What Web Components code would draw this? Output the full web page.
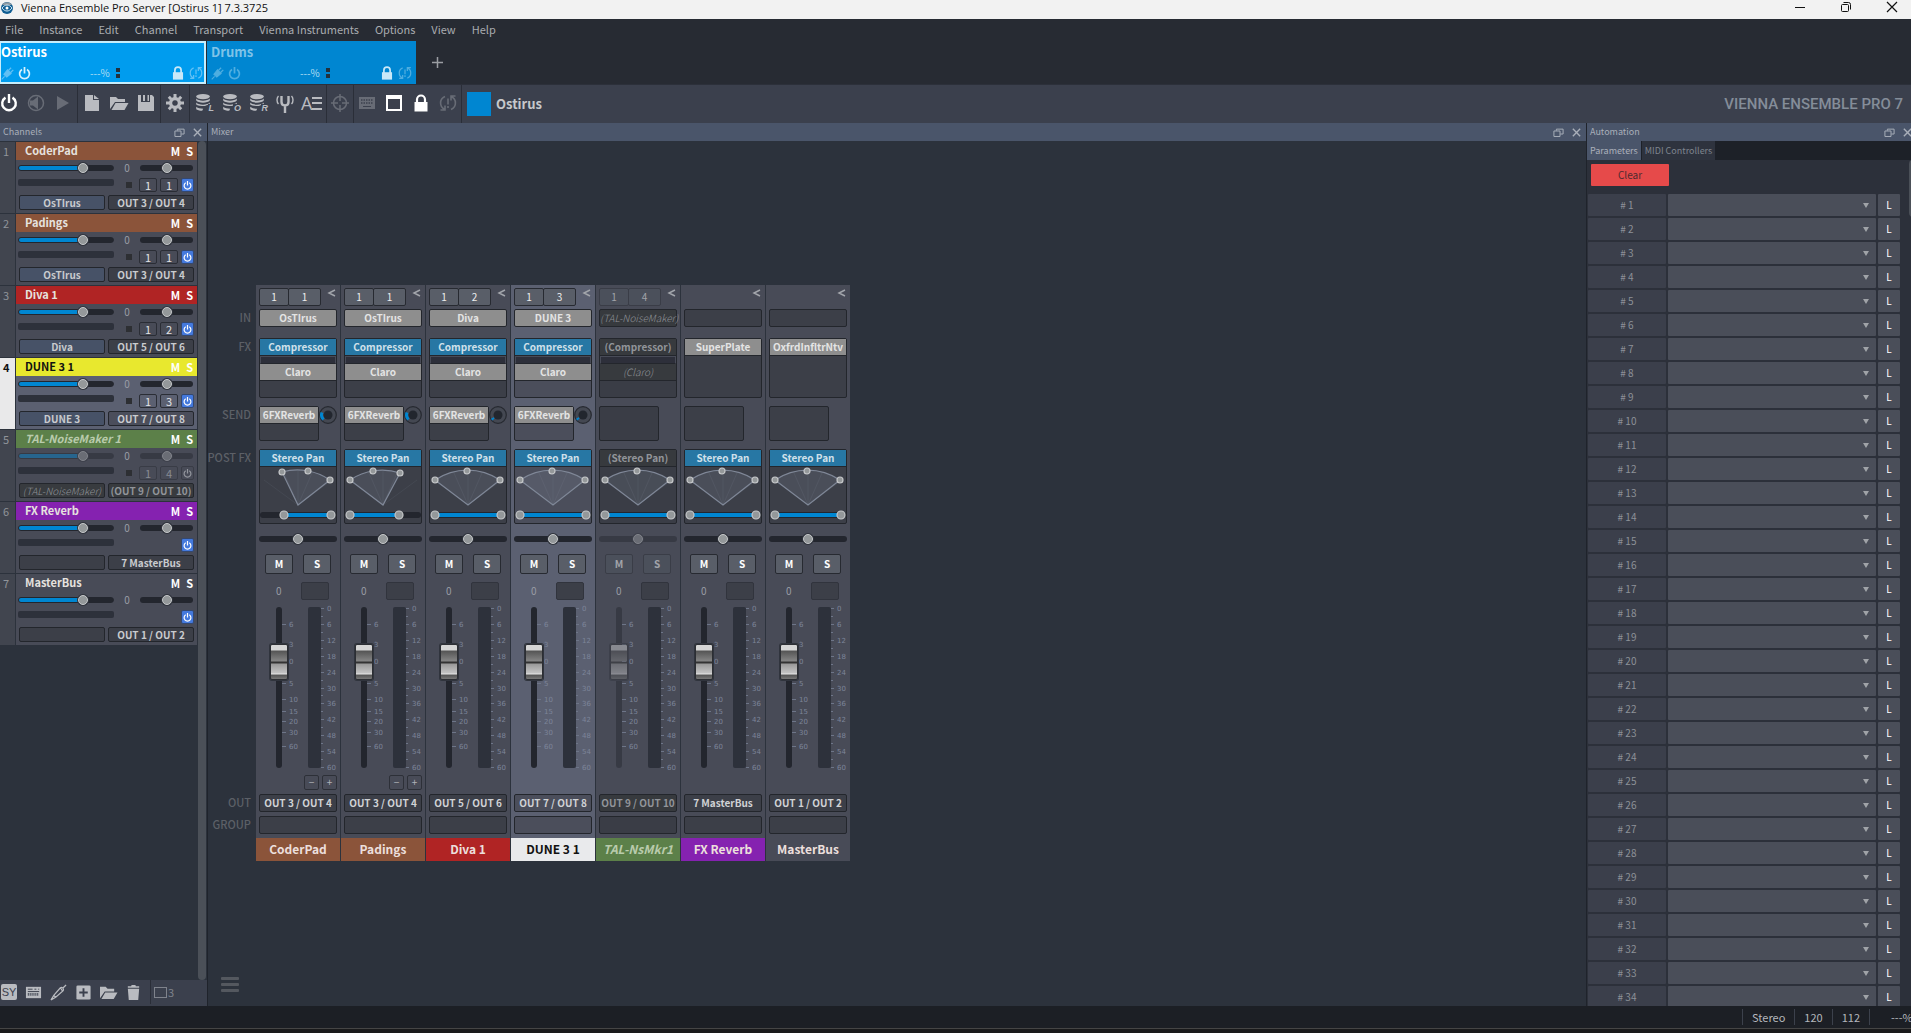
<!DOCTYPE html>
<html lang="en">
<head>
<meta charset="utf-8">
<title>Vienna Ensemble Pro Server</title>
<style>
  html, body {
    height: 100%;
    margin: 0;
    overflow: hidden;
    background: #1c1f25;
  }
  body {
    font-family: "Noto Sans CJK SC", "Noto Sans", sans-serif;
    font-size: 11px;
    line-height: 16px;
    color: #b4b7bc;
  }
</style>
</head>
<body>
<vep-app></vep-app>
<script>
const base = `
  * { box-sizing: border-box; }
  button, input, select {
    margin: 0;
    padding: 0;
    border: 0;
    font: inherit;
    color: inherit;
    background: none;
  }
  button { display: block; white-space: nowrap; }
  svg { display: block; }
`;

const rangeStyle = `
  input[type=range] {
    display: block;
    appearance: none;
    -webkit-appearance: none;
    width: 100%;
    height: 12px;
  }
  input[type=range]::-webkit-slider-runnable-track {
    height: 6px;
    border-radius: 3px;
    background: #23262e;
  }
  input.level::-webkit-slider-runnable-track {
    border: 1px solid #23262e;
    background: linear-gradient(90deg, #0086d1 68%, #23262e 68%);
  }
  input[type=range]::-webkit-slider-thumb {
    -webkit-appearance: none;
    width: 10px;
    height: 10px;
    margin-top: -2px;
    border: 1px solid #c6c8ca;
    border-radius: 50%;
    background: #94989a;
    box-shadow: 0 0 0 1px #30343d;
  }
  input.level::-webkit-slider-thumb { margin-top: -3px; }
  :host([off]) input[type=range] { opacity: .45; }
`;

const icons = {
  power: '<path d="M5.500 3.600a6.800 6.800 0 1 0 7 0" fill="none" stroke="currentColor" stroke-width="2.400"/><path d="M9 0v9" stroke="currentColor" stroke-width="2.400"/>',
  speaker: '<circle cx="9" cy="9" r="7.500" fill="none" stroke="currentColor" stroke-width="1.500"/><path d="M3 6.500h3l5-4v13l-5-4H3z" fill="currentColor"/>',
  play: '<path d="M3 2l12 7-12 7z" fill="currentColor"/>',
  file: '<path d="M2 1h8v5h6v11H2z" fill="currentColor"/><path d="M11 1l5 4h-5z" fill="currentColor"/>',
  folder: '<path d="M0 15V3h6l2 2h7v3H5z" fill="currentColor"/><path d="M5.500 9H18.500l-4 7H1.500z" fill="currentColor"/>',
  save: '<path d="M1 1h3v7h9V1h2l2 2v14H1z" fill="currentColor"/><path d="M6 1h2v6H6zM10.500 1h1.500v6h-1.500z" fill="currentColor"/>',
  gear: '<path d="M9 3a6 6 0 1 0 .01 0zM9 6.200a2.800 2.800 0 1 1-.01 0z" fill="currentColor" fill-rule="evenodd"/><g stroke="currentColor" stroke-width="3"><path d="M9 0v4M9 14v4M0 9h4M14 9h4M2.800 2.800l2.400 2.400M12.800 12.800l2.400 2.400M2.800 15.200l2.400-2.400M12.800 5.200l2.400-2.400"/></g>',
  disks: '<g fill="currentColor"><ellipse cx="8" cy="2.600" rx="6.800" ry="2.600"/><path d="M1.200 4.600c2 2.800 11.600 2.800 13.600 0v2c-2 2.800-11.600 2.800-13.600 0zM1.200 8.600c2 2.800 11.600 2.800 13.600 0v1.700c-3 .5-4 1.500-5 1.800-4 0-7.500-.5-8.600-1.600zM1.200 12.800c2 1.600 4 1.900 7 1.900l-1 2.100c-3 0-5-.6-6-1.500z"/></g>',
  fork: '<path d="M5.500 2v6c0 4.500 7 4.500 7 0V2M9 11v8" fill="none" stroke="currentColor" stroke-width="2.400"/><path d="M2.500 2c-2 2-2 6 0 8M15.500 2c2 2 2 6 0 8" fill="none" stroke="currentColor" stroke-width="1.400"/>',
  target: '<circle cx="9" cy="9" r="6.500" fill="none" stroke="currentColor" stroke-width="1.500"/><path d="M9 0v7M9 11v7M0 9h7M11 9h7" stroke="currentColor" stroke-width="1.500"/>',
  keyboard: '<path d="M1 3h16v12H1z" fill="currentColor"/><path d="M3 6h12M3 9h12" stroke="#3b404d" stroke-width="1.500" stroke-dasharray="1.500 1"/><path d="M5 12.500h8" stroke="#3b404d"/>',
  square: '<path d="M2 2.500h14v13.500H2z" fill="none" stroke="currentColor" stroke-width="2"/><path d="M1 1h16v4H1z" fill="currentColor"/>',
  lock: '<path d="M2.500 8h13v9.500h-13z" fill="currentColor"/><path d="M5 9V5.500a4 4 0 0 1 8 0V9" fill="none" stroke="currentColor" stroke-width="2.200"/>',
  sync: '<path d="M6 2.500a7 7 0 0 0 0 13M12 15.500a7 7 0 0 0 0-13M1.500 16h4.500v-4.500M16.500 2h-4.500v4.500M9 4.500v6M9 12v2" fill="none" stroke="currentColor" stroke-width="1.600"/>',
  plug: '<path d="M1 17l4-4M4 10l5-6 5 5-6 5z" fill="currentColor" stroke="currentColor" stroke-width="1.500"/><path d="M10 5l4-4M13 8l4-4" stroke="currentColor" stroke-width="1.800"/>',
  jack: '<path d="M1 17l3-5 7-8c2-1 4 1 3 3l-8 7-5 3M11 4l2 3M4 12l2 2M14 4l3-3" fill="none" stroke="currentColor" stroke-width="1.300"/>',
  keys: '<path d="M1 3h16v12H1z" fill="currentColor"/><path d="M3 5.500h5M10 5.500h2M14 5.500h1M3 8h12" stroke="#3b404d"/><path d="M3 11h12" stroke="#3b404d" stroke-width="3" stroke-dasharray="1 1"/>',
  plus: '<rect x="1.500" y="1.500" width="15" height="15" rx="1.500" fill="currentColor"/><path d="M9 4.500v9M4.500 9h9" stroke="#3b404d" stroke-width="2"/>',
  trash: '<path d="M3 5h12l-1 12H4zM3 2.500h3.500L7 1h4l.500 1.500H15V4H3z" fill="currentColor"/>',
  restore: '<path d="M1.500 6.500h10v9h-10zM5.500 6V3.500h11v8H12" fill="none" stroke="currentColor" stroke-width="1.600"/>',
  cross: '<path d="M3 3l12 12M15 3L3 15" stroke="currentColor" stroke-width="2.200"/>',
};

customElements.define('vep-icon', class VepIcon extends HTMLElement {
  constructor() {
    super();
    this.attachShadow({mode: 'open'});
  }
  connectedCallback() {
    const size = this.getAttribute('size') || 18;
    this.shadowRoot.innerHTML = `<style>
      :host { display: block; flex: none; }
      svg { display: block; overflow: visible; }
    </style>
    <svg width="${size}" height="${size}" viewBox="0 0 18 18" aria-hidden="true">${icons[this.getAttribute('name')]}</svg>`;
  }
});

customElements.define('window-title', class WindowTitle extends HTMLElement {
  constructor() {
    super();
    this.attachShadow({mode: 'open'});
    this.shadowRoot.innerHTML = `<style>${base}
      :host {
        display: flex;
        align-items: center;
        height: 19px;
        padding: 0 13px 0 1px;
        gap: 8px;
        background: #f2f2f2;
        color: #111;
        font: 11px/16px "Open Sans", "Noto Sans", sans-serif;
      }
      .name { flex: 1; padding-bottom: 3px; }
      .controls { display: flex; gap: 34px; padding: 0 0 6px; }
      button { width: 12px; height: 12px; }
      .logo { margin-bottom: 4px; }
    </style>
    <svg class="logo" width="12" height="14" viewBox="0 0 12 14"><circle cx="6" cy="7" r="6" fill="#0f5d92"/><path d="M1 4a6 6 0 0 1 10 0z" fill="#8e99a2"/><path d="M1 7c3-4 7-4 10 0-3 4-7 4-10 0z" fill="none" stroke="#cfe8f6"/><circle cx="6" cy="7" r="1.500" fill="#fff"/></svg>
    <span class="name"><slot></slot></span>
    <span class="controls">
      <button aria-label="Minimize"><svg width="12" height="12"><path d="M1 6.500h10" stroke="#111"/></svg></button>
      <button aria-label="Restore"><svg width="12" height="12" fill="none" stroke="#111"><rect x="1.500" y="3.500" width="7" height="7" rx="1"/><path d="M3.500 1.500h5a2 2 0 0 1 2 2v5"/></svg></button>
      <button aria-label="Close"><svg width="12" height="12"><path d="M1 1l10 10M11 1L1 11" stroke="#111" stroke-width="1.200"/></svg></button>
    </span>`;
  }
});

customElements.define('menu-bar', class MenuBar extends HTMLElement {
  constructor() {
    super();
    this.attachShadow({mode: 'open'});
    const items = ['File', 'Instance', 'Edit', 'Channel', 'Transport', 'Vienna Instruments', 'Options', 'View', 'Help'];
    this.shadowRoot.innerHTML = `<style>${base}
      :host {
        display: flex;
        align-items: center;
        gap: 16px;
        box-sizing: border-box;
        height: 22px;
        padding: 0 0 2px 5px;
        background: #272b33;
        color: #a9acb0;
      }
    </style>
    ${items.map(item => `<button>${item}</button>`).join('')}`;
  }
});

customElements.define('instance-tab', class InstanceTab extends HTMLElement {
  constructor() {
    super();
    this.attachShadow({mode: 'open'});
    this.shadowRoot.innerHTML = `<style>${base}
      :host {
        display: flex;
        flex-direction: column;
        justify-content: space-between;
        width: 209px;
        height: 43px;
        padding: 2px 4px 3px 4px;
        background: #0086d1;
        color: #7fc3e8;
        box-sizing: border-box;
      }
      :host([active]) {
        width: 206px;
        padding: 0 1px 1px 0;
        border: 2px solid #c6edfc;
        border-left-width: 1px;
        background: #009cee;
        color: #fff;
      }
      b { font-size: 13px; line-height: 18px; }
      .row { display: flex; align-items: center; gap: 4px; color: #4faee0; font-size: 10px; }
      .load { flex: 1; display: flex; gap: 6px; align-items: center; padding-left: 55px; color: #b5dff4; }
      .lamp { display: grid; gap: 2px; }
      .lamp i { width: 4px; height: 4px; background: #22313c; }
      .lock { color: #c8e8f8; }
      :host([active]) .row { color: #62c0f4; }
      :host([active]) .load { color: #b5dff4; }
      :host([active]) .on { color: #d6f1fd; }
    </style>
    <b><slot></slot></b>
    <div class="row">
      <vep-icon name="plug" size="13"></vep-icon>
      <vep-icon class="on" name="power" size="13"></vep-icon>
      <span class="load">---% <span class="lamp"><i></i><i></i></span></span>
      <vep-icon class="lock" name="lock" size="14"></vep-icon>
      <vep-icon name="sync" size="14"></vep-icon>
    </div>`;
  }
});

customElements.define('tool-bar', class ToolBar extends HTMLElement {
  constructor() {
    super();
    this.attachShadow({mode: 'open'});
    const groups = [
      [['power', 'Power', 'lit'], ['speaker', 'Mute', 'dim'], ['play', 'Play', 'dim']],
      [['file', 'New'], ['folder', 'Open'], ['save', 'Save']],
      [['gear', 'Preferences']],
      [['disks', 'Library', '', 'L'], ['disks', 'Optimize', '', 'O'], ['disks', 'Reset', '', 'R'], ['fork', 'Tuning'], ['', 'Names']],
      [['target', 'Learn', 'dim']],
      [['keyboard', 'Keyboard', 'dim'], ['square', 'Window', 'lit'], ['lock', 'Lock', 'lit'], ['sync', 'Sync', 'dim']],
    ];
    const button = ([icon, label, tone = '', mark]) => `<button class="${tone}" aria-label="${label}">${
      icon ? `<vep-icon name="${icon}"></vep-icon>` : '<span class="names">A<i></i></span>'
    }${mark ? `<sub>${mark}</sub>` : ''}</button>`;
    this.shadowRoot.innerHTML = `<style>${base}
      :host {
        display: flex;
        align-items: center;
        height: 39px;
        border-top: 1px solid #2c303a;
        background: #3b404d;
        color: #b9bbc0;
      }
      .group {
        display: flex;
        align-items: center;
        gap: 9px;
        height: 100%;
        padding: 0 5px 2px;
        border-right: 1px solid #2a2e38;
      }
      .group:first-of-type { padding: 0 5px 2px 0; }
      .group:nth-of-type(n + 5) { padding: 0 4px 2px; }
      button { position: relative; width: 18px; height: 20px; }
      .lit { color: #fff; }
      .dim { color: #686c76; }
      sub {
        position: absolute;
        right: -1px;
        bottom: 0;
        padding-left: 1px;
        font: italic bold 9px/9px "Liberation Sans", sans-serif;
        background: #3b404d;
      }
      .names { display: flex; align-items: center; margin-left: -2px; font: 18px/20px "Open Sans", sans-serif; }
      .names i {
        flex: none;
        width: 10px;
        height: 13px;
        border: solid #b9bbc0;
        border-width: 2px 0;
        background: linear-gradient(#b9bbc0, #b9bbc0) center / 10px 2px no-repeat;
      }
      .swatch { width: 24px; height: 24px; margin: 0 5px; background: #0086d1; }
      b { flex: 1; font-size: 13px; color: #c6c8cb; }
      .brand { margin-right: 14px; font: 500 15px/24px Roboto, sans-serif; color: #848d99; }
    </style>
    ${groups.map(group => `<div class="group">${group.map(button).join('')}</div>`).join('')}
    <span class="swatch"></span>
    <b>Ostirus</b>
    <span class="brand">VIENNA ENSEMBLE PRO 7</span>`;
  }
});

customElements.define('dock-panel', class DockPanel extends HTMLElement {
  constructor() {
    super();
    this.attachShadow({mode: 'open'});
    this.shadowRoot.innerHTML = `<style>${base}
      :host {
        display: flex;
        flex-direction: column;
        min-height: 0;
        overflow: hidden;
        background: #2c323c;
      }
      header {
        flex: none;
        display: flex;
        align-items: center;
        gap: 7px;
        height: 18px;
        padding: 0 4px 0 3px;
        background: #4a556a;
        color: #a9afb9;
        font-size: 9px;
      }
      span { flex: 1; }
    </style>
    <header>
      <span>${this.getAttribute('label')}</span>
      <button aria-label="Undock"><vep-icon name="restore" size="11"></vep-icon></button>
      <button aria-label="Close"><vep-icon name="cross" size="11"></vep-icon></button>
    </header>
    <slot></slot>`;
  }
});

customElements.define('channel-row', class ChannelRow extends HTMLElement {
  constructor() {
    super();
    this.attachShadow({mode: 'open'});
  }
  connectedCallback() {
    const ch = this.channel;
    this.toggleAttribute('off', !!ch.off);
    this.toggleAttribute('selected', !!ch.selected);
    this.shadowRoot.innerHTML = `<style>${base}${rangeStyle}
      :host {
        display: grid;
        grid-template-columns: 16px 1fr;
        height: 72px;
        border-bottom: 1px solid #2c323c;
        box-sizing: border-box;
        color: #c9cbce;
      }
      .index {
        padding: 1px 0 0 3px;
        border-right: 1px solid #2c323c;
        background: #41454f;
        color: #90949a;
      }
      :host([selected]) .index { background: #e9e9ea; color: #111; font-weight: bold; }
      .card { background: #484b57; }
      :host([selected]) .card { background: #5b6071; }
      header {
        display: flex;
        gap: 6px;
        height: 18px;
        padding: 0 4px 0 9px;
        line-height: 17px;
        font-weight: bold;
        background: ${ch.color || 'transparent'};
        color: #e6e2df;
      }
      header span { flex: 1; }
      header button { color: #fff; }
      :host([selected]) header { color: #111; }
      :host([off]) header span { font-style: italic; color: #b9cbac; }
      .body {
        display: grid;
        grid-template-columns: 96px 1fr 54px;
        grid-template-rows: 14px 14px 15px;
        padding: 1px 3px 0 2px;
        row-gap: 3px;
      }
      .body input { height: 14px; }
      .pan { padding-right: 1px; }
      .value { text-align: center; line-height: 13px; font-size: 10px; color: #9a9da5; }
      .meter { height: 7px; margin-top: 1px; background: #2d313b; border-radius: 2px; }
      .midi { grid-column: 2 / 4; display: flex; justify-content: flex-end; gap: 3px; }
      .midi i { width: 6px; height: 6px; margin: 4px 4px 0 0; background: #2d2f33; }
      .midi button, .box {
        height: 14px;
        border: 1px solid #2a2d35;
        border-radius: 2px;
        text-align: center;
      }
      .midi button { width: 18px; line-height: 11px; color: #e2e3e5; }
      .midi .power {
        display: grid;
        place-content: center;
        width: 13px;
        background: #4479dd;
        border-color: #34486f;
        color: #fff;
      }
      :host([off]) .midi .power { background: none; border-color: #393c46; color: #94979e; }
      :host([off]) .midi button { border-color: #393c46; color: #888b93; }
      .ports { grid-column: 1 / 4; display: grid; grid-template-columns: 1fr 1fr; gap: 3px; padding-left: 1px; }
      .box {
        height: 15px;
        line-height: 12px;
        font-size: 10px;
        font-weight: bold;
        background: #3c3f48;
        border-color: #23262c;
      }
      .source { background: #475267; }
      .box:empty { background: #3c3f48; }
      :host([selected]) .out { background: #4b4e5b; }
      :host([off]) .box { color: #919499; background: #383b3f; }
      :host([off]) .source { font-weight: 300; font-style: italic; }
    </style>
    <div class="index">${ch.id}</div>
    <div class="card">
      <header><span>${ch.name}</span><button aria-label="Mute">M</button><button aria-label="Solo">S</button></header>
      <div class="body">
        <input class="level" type="range" value="70" aria-label="Volume ${ch.name}">
        <span class="value">0</span>
        <div class="pan"><input type="range" value="50" aria-label="Pan ${ch.name}"></div>
        <div class="meter"></div>
        <div class="midi">
          ${ch.midi ? `<i></i>${ch.midi.map(n => `<button>${n}</button>`).join('')}` : ''}
          <button class="power" aria-label="Enable"><vep-icon name="power" size="9"></vep-icon></button>
        </div>
        <div class="ports">
          <button class="box source">${ch.source || ''}</button>
          <button class="box out">${ch.off ? `(${ch.out})` : ch.out}</button>
        </div>
      </div>
    </div>`;
  }
});

customElements.define('pan-scope', class PanScope extends HTMLElement {
  constructor() {
    super();
    this.attachShadow({mode: 'open'});
  }
  connectedCallback() {
    // three handles on the arc, then the two ends of the width bar
    const [a, b, c, from, to] = this.scope;
    const dot = ([x, y], r) => `<circle cx="${x}" cy="${y}" r="${r}" fill="#94989a" stroke="#c6c8ca" stroke-width="1.200"/>`;
    this.shadowRoot.innerHTML = `<style>
      :host { display: block; }
      svg { display: block; }
    </style>
    <svg width="76" height="56" viewBox="0 0 76 56" aria-hidden="true">
      <path d="M4 13L38 38L72 13" fill="none" stroke="#4a4e59" stroke-opacity=".6"/>
      <path d="M${a} A58 58 0 0 1 ${c} L38 38Z" fill="#8a93a8" fill-opacity=".18" stroke="#7f8797" stroke-width="1.200"/>
      <path d="M38 4V38M24 6L38 38M52 6L38 38" stroke="#8a93a8" stroke-opacity=".12" fill="none"/>
      <rect y="45" width="76" height="6" rx="3" fill="#23262e"/>
      <rect x="${from}" y="46" width="${to - from}" height="4" fill="#0086d1"/>
      ${dot(a, 3)}${dot(b, 3)}${dot(c, 3)}
      ${dot([from, 48], 4)}${dot([to, 48], 4)}
    </svg>`;
  }
});

const faderScale = [[6, 18], [3, 38], [0, 55], [5, 77], [10, 93], [15, 105], [20, 115], [30, 126], [60, 140]];
const meterScale = Array.from({length: 11}, (_, i) => [i * 6, 1 + Math.round(i * 15.9)]);

const scale = () => `<svg class="scale" width="84" height="168" viewBox="0 0 84 168">
  ${faderScale.map(([n, y]) => `<path d="M26 ${y - .5}h4"/><text x="33" y="${y + 2}">${n}</text>`).join('')}
  ${meterScale.map(([n, y]) => `<path d="M65 ${y + .5}h3"/><text x="71" y="${y + 3}">${n}</text>`).join('')}
  ${meterScale.slice(1).map(([n, y]) => `<path d="M65 ${y - 7.5}h2"/>`).join('')}
</svg>`;

// top to bottom: midi, in, fx, send, post fx, pan, mute/solo, readout, fader, nudge, out, group, name
const stripRows = '24px 29px 68px 43px 85px 20px 28px 25px 168px 19px 22px 22px 23px';

const wide = [[5, 13], [37, 4], [70, 13], 5, 71];

customElements.define('mixer-strip', class MixerStrip extends HTMLElement {
  constructor() {
    super();
    this.attachShadow({mode: 'open'});
  }
  connectedCallback() {
    const ch = this.channel;
    const paren = text => ch.off ? `(${text})` : text;
    this.toggleAttribute('off', !!ch.off);
    this.toggleAttribute('selected', !!ch.selected);
    this.shadowRoot.innerHTML = `<style>${base}${rangeStyle}
      :host {
        --box: #3c3f48;
        --edge: #23262c;
        display: grid;
        grid-template-rows: ${stripRows};
        width: 84px;
        background: #484b57;
        color: #d0d2d5;
        font-size: 10px;
        line-height: 16px;
      }
      :host([selected]) { --box: #4b4e5b; background: #5b6071; }
      .cell { min-width: 0; padding: 0 3px; }
      .midi { display: flex; align-items: flex-start; padding-top: 3px; }
      .channel {
        width: 30px;
        height: 18px;
        border: 1px solid #272a31;
        border-radius: 2px;
        background: #595e68;
        color: #eee;
      }
      .channel + .channel { width: 33px; margin-left: -1px; }
      .fold { margin-left: auto; }
      .box {
        width: 100%;
        height: 18px;
        border: 1px solid var(--edge);
        border-radius: 2px;
        background: var(--box);
        text-align: center;
        font-weight: bold;
        line-height: 15px;
      }
      .rack { width: 100%; border: 1px solid var(--edge); border-radius: 2px; background: var(--box); }
      .slot {
        width: 100%;
        height: 17px;
        border-bottom: 1px solid var(--edge);
        line-height: 16px;
        text-align: center;
        font-weight: bold;
      }
      .grey { background: #8e8e8e; color: #e4e4e4; }
      .blue { background: #2777a4; color: #cfe0ea; }
      .gain { height: 8px; border: 1px solid #484b57; border-bottom-color: var(--edge); background: #2d2f3a; }
      .fx { height: 60px; }
      .send { display: flex; }
      .send .rack { flex: none; width: 60px; height: 35px; }
      .post { height: 75px; }
      .balance input { height: 10px; }
      .keys { display: flex; justify-content: center; gap: 10px; }
      .keys button {
        width: 28px;
        height: 20px;
        border: 1px solid #272a31;
        border-radius: 2px;
        background: #595e68;
        color: #fff;
        font-weight: bold;
        line-height: 18px;
      }
      .readout { display: flex; justify-content: space-between; padding: 0 11px 0 20px; color: #9a9da5; line-height: 18px; }
      .readout i { width: 28px; height: 18px; border: 1px solid #31343d; border-radius: 2px; background: #3c3f48; }
      .fader { position: relative; display: flex; padding: 0 0 0 14px; }
      .fader input {
        width: 18px;
        height: 161px;
        writing-mode: vertical-lr;
        direction: rtl;
        z-index: 1;
      }
      .fader input::-webkit-slider-runnable-track { width: 6px; height: 159px; margin: 0 auto; }
      .fader input::-webkit-slider-thumb {
        width: 18px;
        height: 36px;
        margin: 0 0 0 -6px;
        border: 1px solid #2c2e33;
        border-radius: 2px;
        background: linear-gradient(#d5d5d5 5px, #555 6px, #858585 16px, #333 17px, #333 18px, #999 19px, #c4c4c4 28px, #e8e8e8 29px, #555 30px, #777);
      }
      .meter { width: 13px; height: 161px; margin-left: 20px; border-radius: 2px; background: #2d313b; }
      .scale { position: absolute; inset: 0; overflow: visible; pointer-events: none; stroke: #6d7588; }
      .scale text { stroke: none; fill: #7d859a; font: 7px/8px "DejaVu Sans", sans-serif; }
      .nudge { display: flex; justify-content: flex-end; gap: 3px; }
      .nudge button {
        width: 15px;
        height: 15px;
        border: 1px solid #2d3038;
        border-radius: 2px;
        color: #b0b3b9;
        line-height: 12px;
      }
      .name {
        background: ${ch.selected ? '#e9eaec' : ch.color || 'transparent'};
        color: ${ch.selected ? '#111' : '#ecdfdc'};
        text-align: center;
        font-size: 12px;
        line-height: 22px;
        font-weight: bold;
      }
      :host([off]) { --box: #3a3d46; color: #8d9094; }
      :host([off]) .channel, :host([off]) .keys button { background: #4b505b; border-color: #3a3d47; color: #a2a4aa; }
      :host([off]) .box:not(:empty), :host([off]) .slot { background: #373a3e; color: #919499; }
      :host([off]) .thin { font-style: italic; font-weight: 300; }
      :host([off]) .name { font-style: italic; color: #b9cbac; }
    </style>
    <div class="cell midi">
      ${ch.midi ? ch.midi.map(n => `<button class="channel">${n}</button>`).join('') : ''}
      <button class="fold" aria-label="Fold"><svg width="10" height="10"><path d="M8 2L2 5l6 3" fill="none" stroke="#a2a5ab" stroke-width="1.500"/></svg></button>
    </div>
    <div class="cell"><button class="box thin ${ch.source ? 'grey' : ''}">${ch.source || ''}</button></div>
    <div class="cell"><div class="rack fx">
      ${ch.fx.map(name => name === 'Compressor'
        ? `<button class="slot blue">${paren(name)}</button><div class="gain"></div>`
        : `<button class="slot grey thin">${paren(name)}</button>`).join('')}
    </div></div>
    <div class="cell send">
      <div class="rack">${ch.send ? '<button class="slot grey">6FXReverb</button>' : ''}</div>
      ${ch.send ? `<svg width="18" height="18" viewBox="0 0 18 18"><circle cx="9" cy="9" r="8.300" fill="#444852" stroke="#262930" stroke-width="1.200"/><circle cx="9" cy="9" r="4.500" fill="#22262e"/><path d="${ch.send === 'high' ? 'M4.500 13.500A6.400 6.400 0 0 1 3 6.500' : 'M4.500 13.500A6.400 6.400 0 0 1 3.300 12'}" fill="none" stroke="#0086d1" stroke-width="3"/></svg>` : ''}
    </div>
    <div class="cell"><div class="rack post">
      <button class="slot blue">${paren('Stereo Pan')}</button>
    </div></div>
    <div class="cell balance"><input type="range" value="50" aria-label="Pan ${ch.short || ch.name}"></div>
    <div class="cell keys"><button>M</button><button>S</button></div>
    <div class="readout"><span>0</span><i></i></div>
    <div class="fader">
      ${scale()}
      <input type="range" value="70" aria-label="Volume ${ch.short || ch.name}">
      <div class="meter"></div>
    </div>
    <div class="cell nudge">${ch.nudge ? '<button>−</button><button>+</button>' : ''}</div>
    <div class="cell"><button class="box">${ch.out}</button></div>
    <div class="cell"><button class="box" aria-label="Group"></button></div>
    <div class="name">${ch.short || ch.name}</div>`;
    const scope = document.createElement('pan-scope');
    scope.scope = ch.scope || wide;
    this.shadowRoot.querySelector('.post').append(scope);
  }
});

const channels = [
  {id: 1, name: 'CoderPad', color: '#8b543a', midi: [1, 1], source: 'OsTIrus', out: 'OUT 3 / OUT 4', fx: ['Compressor', 'Claro'], send: 'high', nudge: true, scope: [[22, 5], [48, 4], [70, 13], 24, 71]},
  {id: 2, name: 'Padings', color: '#8b543a', midi: [1, 1], source: 'OsTIrus', out: 'OUT 3 / OUT 4', fx: ['Compressor', 'Claro'], send: 'high', nudge: true, scope: [[5, 13], [28, 4], [55, 6], 5, 54]},
  {id: 3, name: 'Diva 1', color: '#b02424', midi: [1, 2], source: 'Diva', out: 'OUT 5 / OUT 6', fx: ['Compressor', 'Claro'], send: 'low'},
  {id: 4, name: 'DUNE 3 1', color: '#e8e82e', selected: true, midi: [1, 3], source: 'DUNE 3', out: 'OUT 7 / OUT 8', fx: ['Compressor', 'Claro'], send: 'low'},
  {id: 5, name: 'TAL-NoiseMaker 1', short: 'TAL-NsMkr1', color: '#5c8049', off: true, midi: [1, 4], source: '(TAL-NoiseMaker)', out: 'OUT 9 / OUT 10', fx: ['Compressor', 'Claro']},
  {id: 6, name: 'FX Reverb', color: '#8522b0', out: '7 MasterBus', fx: ['SuperPlate']},
  {id: 7, name: 'MasterBus', out: 'OUT 1 / OUT 2', fx: ['OxfrdInfltrNtv']},
];

customElements.define('channel-list', class ChannelList extends HTMLElement {
  constructor() {
    super();
    this.attachShadow({mode: 'open'});
    this.shadowRoot.innerHTML = `<style>${base}
      :host { flex: 1; min-height: 0; display: flex; flex-direction: column; }
      .view { flex: 1; min-height: 0; display: flex; }
      .rows { flex: 1; padding-top: 1px; overflow: hidden; }
      .bar { width: 8px; margin: 0 1px; border-radius: 4px; background: #4b5058; }
      footer {
        display: flex;
        align-items: center;
        height: 26px;
        gap: 8px;
        padding: 0 0 2px 1px;
        background: #3b404d;
        color: #b9bbc0;
      }
      .sy { width: 16px; height: 16px; border-radius: 2px; background: #b9bbc0; color: #3b404d; font: 11px/17px "Liberation Sans", sans-serif; }
      .count { display: flex; align-items: center; gap: 1px; align-self: stretch; padding-left: 3px; border-left: 1px solid #2a2e38; color: #7f838c; }
      .count i { width: 13px; height: 11px; border: 1px solid #7f838c; }
    </style>
    <div class="view"><div class="rows"></div><div class="bar"></div></div>
    <footer>
      <button class="sy">SY</button>
      <button aria-label="Add instrument"><vep-icon name="keys" size="17"></vep-icon></button>
      <button aria-label="Add input"><vep-icon name="jack" size="17"></vep-icon></button>
      <button aria-label="Add"><vep-icon name="plus" size="17"></vep-icon></button>
      <button aria-label="Open"><vep-icon name="folder" size="17"></vep-icon></button>
      <button aria-label="Delete"><vep-icon name="trash" size="17"></vep-icon></button>
      <span class="count"><i></i>3</span>
    </footer>`;
    const rows = this.shadowRoot.querySelector('.rows');
    for (const channel of channels) {
      const row = document.createElement('channel-row');
      row.channel = channel;
      rows.append(row);
    }
  }
});

customElements.define('mixer-desk', class MixerDesk extends HTMLElement {
  constructor() {
    super();
    this.attachShadow({mode: 'open'});
    const labels = ['', 'IN', 'FX', 'SEND', 'POST FX', '', '', '', '', '', 'OUT', 'GROUP', ''];
    this.shadowRoot.innerHTML = `<style>${base}
      :host {
        flex: 1;
        min-height: 0;
        display: grid;
        grid-template-rows: 1fr auto 1fr;
        padding-bottom: 2px;
      }
      .desk { grid-row: 2; display: flex; gap: 1px; }
      .labels {
        display: grid;
        grid-template-rows: ${stripRows};
        width: 47px;
        padding-right: 4px;
        justify-content: end;
        justify-items: end;
        font-weight: 500;
        color: #5c6067;
        white-space: nowrap;
      }
      .menu { grid-row: 3; align-self: end; display: grid; gap: 3px; width: 18px; margin: 0 0 12px 13px; }
      .menu i { height: 3px; border-radius: 1px; background: #54585f; }
    </style>
    <div class="desk"><div class="labels">${labels.map(label => `<span>${label}</span>`).join('')}</div></div>
    <button class="menu" aria-label="Mixer menu"><i></i><i></i><i></i></button>`;
    const desk = this.shadowRoot.querySelector('.desk');
    for (const channel of channels) {
      const strip = document.createElement('mixer-strip');
      strip.channel = channel;
      desk.append(strip);
    }
  }
});

customElements.define('automation-row', class AutomationRow extends HTMLElement {
  constructor() {
    super();
    this.attachShadow({mode: 'open'});
  }
  connectedCallback() {
    this.shadowRoot.innerHTML = `<style>${base}
      :host {
        flex: none;
        display: grid;
        grid-template-columns: 78px 1fr 22px;
        gap: 2px;
        height: 22px;
        line-height: 22px;
        text-align: center;
        font-size: 10px;
      }
      label { background: #3b3f4b; color: #8d9198; border-radius: 1px; }
      select {
        -webkit-appearance: none;
        appearance: none;
        width: 100%;
        min-width: 0;
        height: 22px;
        border-radius: 1px;
        background: #4a4e59;
      }
      .pick { position: relative; }
      .pick svg { position: absolute; right: 7px; top: 9px; pointer-events: none; }
      button { background: #4a4e59; color: #fff; border-radius: 1px; }
    </style>
    <label for="target"># ${this.getAttribute('index')}</label>
    <div class="pick">
      <select id="target"><option></option></select>
      <svg width="6" height="5"><path d="M0 0h6L3 5z" fill="#a0a3a8"/></svg>
    </div>
    <button>L</button>`;
  }
});

customElements.define('automation-list', class AutomationList extends HTMLElement {
  constructor() {
    super();
    this.attachShadow({mode: 'open'});
    const rows = Array.from({length: 34}, (_, i) => `<automation-row index="${i + 1}"></automation-row>`);
    this.shadowRoot.innerHTML = `<style>${base}
      :host { flex: 1; min-height: 0; display: flex; flex-direction: column; }
      nav { flex: none; display: flex; gap: 1px; height: 19px; background: #1d2128; font-size: 9px; }
      nav button { padding: 0 3px; height: 19px; background: #2e333e; color: #7f858e; }
      nav button.active { background: #4a556a; color: #aab0ba; }
      .view { flex: 1; min-height: 0; display: flex; gap: 9px; overflow: hidden; background: #2c303a; }
      .rows { flex: 1; display: flex; flex-direction: column; gap: 2px; padding: 4px 0 0 1px; }
      .clear { flex: none; width: 78px; height: 22px; margin: 0 0 6px 3px; border-radius: 1px; background: #e64a4a; color: #4f2a2f; font-size: 10px; }
      .bar { flex: none; width: 8px; height: 57px; border-radius: 4px; background: #4b5058; }
    </style>
    <nav><button class="active">Parameters</button><button>MIDI Controllers</button></nav>
    <div class="view">
      <div class="rows"><button class="clear">Clear</button>${rows.join('')}</div>
      <div class="bar"></div>
    </div>`;
  }
});

customElements.define('status-bar', class StatusBar extends HTMLElement {
  constructor() {
    super();
    this.attachShadow({mode: 'open'});
    this.shadowRoot.innerHTML = `<style>${base}
      :host {
        display: flex;
        justify-content: flex-end;
        align-items: center;
        height: 23px;
        background: #1c1f25;
        border-bottom: 1px solid #454545;
      }
      span { padding: 0 9px; border-left: 1px solid #3c414c; }
      .load { width: 48px; padding: 0 0 0 21px; }
    </style>
    <span>Stereo</span><span>120</span><span>112</span><span class="load">---%</span>`;
  }
});

customElements.define('vep-app', class VepApp extends HTMLElement {
  constructor() {
    super();
    this.attachShadow({mode: 'open'});
    this.shadowRoot.innerHTML = `<style>${base}
      :host {
        display: grid;
        grid-template-rows: auto auto auto auto minmax(0, 1fr) auto 4px;
        height: 100vh;
        background: #1a1a1b;
      }
      /* the workspace runs a little past the window's right edge */
      tool-bar, main, status-bar { width: calc(100% + 6px); }
      .tabs { display: flex; align-items: center; gap: 1px; background: #272b33; }
      .add { margin-left: 15px; }
      main {
        display: grid;
        grid-template-columns: 207px minmax(0, 1fr) 330px;
        gap: 1px;
        min-height: 0;
        background: #1f232b;
      }
    </style>
    <window-title>Vienna Ensemble Pro Server [Ostirus 1] 7.3.3725</window-title>
    <menu-bar></menu-bar>
    <div class="tabs">
      <instance-tab active>Ostirus</instance-tab>
      <instance-tab>Drums</instance-tab>
      <button class="add" aria-label="Add instance"><svg width="11" height="11"><path d="M5.500 0v11M0 5.500h11" stroke="#9a9da2" stroke-width="1.500"/></svg></button>
    </div>
    <tool-bar></tool-bar>
    <main>
      <dock-panel label="Channels"><channel-list></channel-list></dock-panel>
      <dock-panel label="Mixer"><mixer-desk></mixer-desk></dock-panel>
      <dock-panel label="Automation"><automation-list></automation-list></dock-panel>
    </main>
    <status-bar></status-bar>`;
  }
});
</script>
</body>
</html>
